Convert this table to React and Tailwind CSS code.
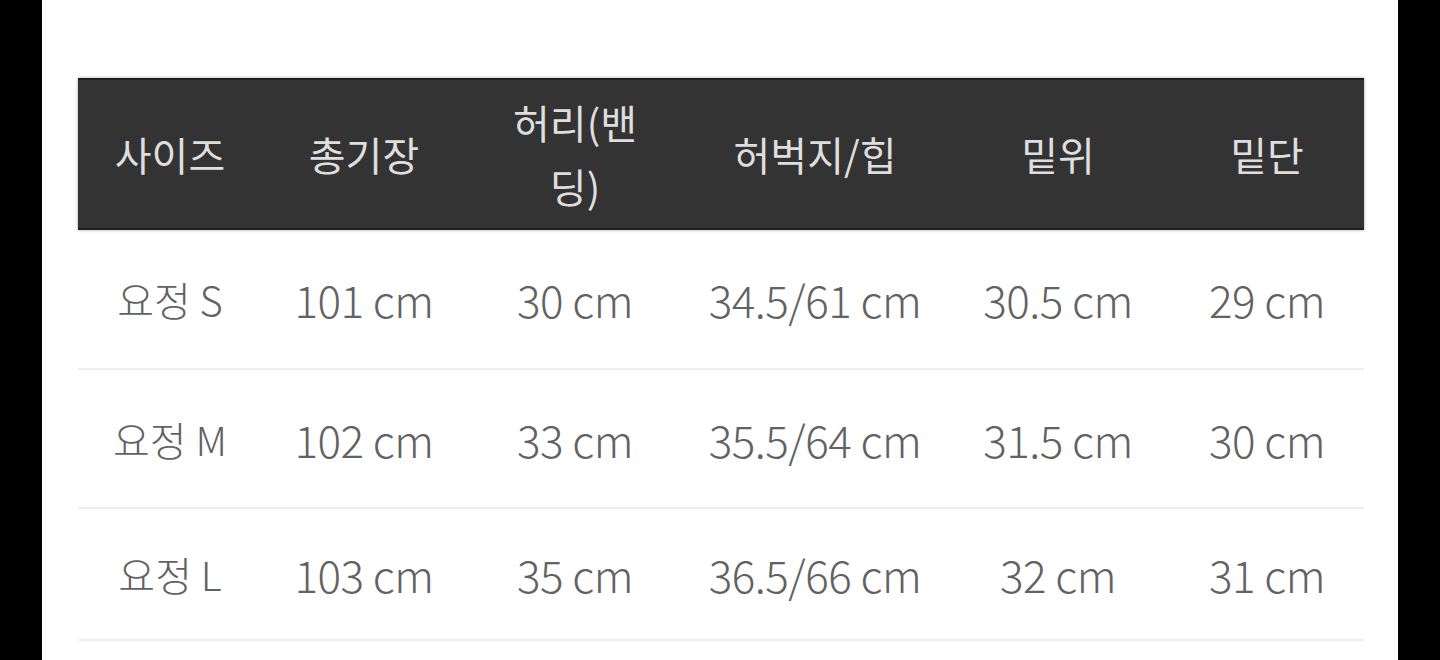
import React from "react";

const headers = ["사이즈", "총기장", "허리(밴딩)", "허벅지/힙", "밑위", "밑단"];
const rows = [
  { h: "h-[140px]", cells: ["요정 S", "101 cm", "30 cm", "34.5/61 cm", "30.5 cm", "29 cm"] },
  { h: "h-[139px]", cells: ["요정 M", "102 cm", "33 cm", "35.5/64 cm", "31.5 cm", "30 cm"] },
  { h: "h-[132px]", cells: ["요정 L", "103 cm", "35 cm", "36.5/66 cm", "32 cm", "31 cm"] },
];

const grid = "grid grid-cols-[184px_204px_218px_262px_224px_194px]";

export default function App() {
  return (
    <div
      className="w-[1440px] h-[660px] bg-black flex justify-center overflow-hidden"
      style={{ fontFamily: '"Noto Sans CJK KR", "Noto Sans", sans-serif' }}
    >
      <div className="w-[1356px] h-full bg-white pt-[78px] pl-[36px]">
        <div className="w-[1286px]">
          <div className={`${grid} h-[152px] bg-[#333333] border-t-2 border-b-2 border-[#1e1e1e] shadow-[0_0_3px_rgba(0,0,0,0.35)]`}>
            {headers.map((t, i) => (
              <div
                key={i}
                className={`flex items-center justify-center text-center text-[40px] leading-[64px] text-[#dedede] font-normal ${i === 2 ? "px-[38px]" : "px-2"}`}
              >
                {t}
              </div>
            ))}
          </div>
          {rows.map((r, ri) => (
            <div key={ri} className={`${grid} ${r.h} border-b-2 border-[#eeeeee]`}>
              {r.cells.map((c, ci) => (
                <div
                  key={ci}
                  className={`flex items-center justify-center text-center text-[#626262] font-light whitespace-nowrap ${ci === 0 ? "text-[40px]" : "text-[44px] tracking-[-0.5px]"}`}
                >
                  {c}
                </div>
              ))}
            </div>
          ))}
        </div>
      </div>
    </div>
  );
}
